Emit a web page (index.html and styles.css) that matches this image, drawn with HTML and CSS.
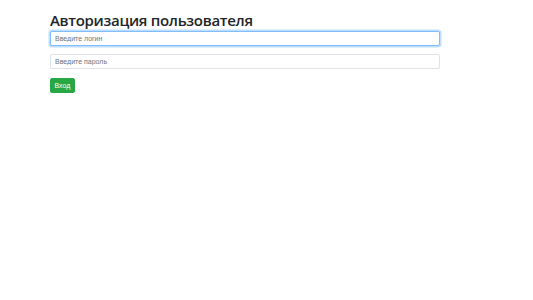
FILE: index.html
```html
<!DOCTYPE html>
<html lang="ru">
<head>
<meta charset="utf-8">
<title>Авторизация</title>
<link rel="stylesheet" href="styles.css">
</head>
<body>
<div class="container">
  <h1 class="title">Авторизация пользователя</h1>
  <form class="form">
    <input class="field field-focus" type="text" placeholder="Введите логин">
    <input class="field" type="password" placeholder="Введите пароль">
    <button class="btn" type="button">Вход</button>
  </form>
</div>
</body>
</html>
```

FILE: styles.css
```css
html, body {
  margin: 0;
  padding: 0;
  background: #fff;
}
body {
  font-family: "Liberation Sans", Arial, sans-serif;
  color: #212529;
}
.container {
  padding: 11px 0 0 50px;
  width: 390px;
}
.title {
  font-family: "Open Sans", "Noto Sans", sans-serif;
  font-weight: 600;
  font-size: 15px;
  line-height: 18px;
  letter-spacing: -0.3px;
  margin: 0 0 2px 0;
  color: #212529;
}
.form {
  display: flex;
  flex-direction: column;
  align-items: flex-start;
  gap: 8px;
}
.field {
  box-sizing: border-box;
  width: 390px;
  height: 15px;
  padding: 0 4px;
  border: 1px solid #dfe3e7;
  border-radius: 2px;
  font-family: "Liberation Sans", Arial, sans-serif;
  font-size: 7px;
  color: #495057;
  outline: none;
  margin: 0;
}
.field::placeholder {
  color: #6c757d;
}
.field-focus {
  border-color: #80bdff;
  box-shadow: 0 0 0 1.5px rgba(0, 123, 255, 0.25);
}
.btn {
  box-sizing: border-box;
  height: 15px;
  margin-top: 1px;
  padding: 0 3.5px;
  border: 1px solid #28a745;
  border-radius: 2px;
  background: #28a745;
  color: #fff;
  font-family: "Liberation Sans", Arial, sans-serif;
  font-size: 7px;
  line-height: 13px;
  cursor: pointer;
}
```
